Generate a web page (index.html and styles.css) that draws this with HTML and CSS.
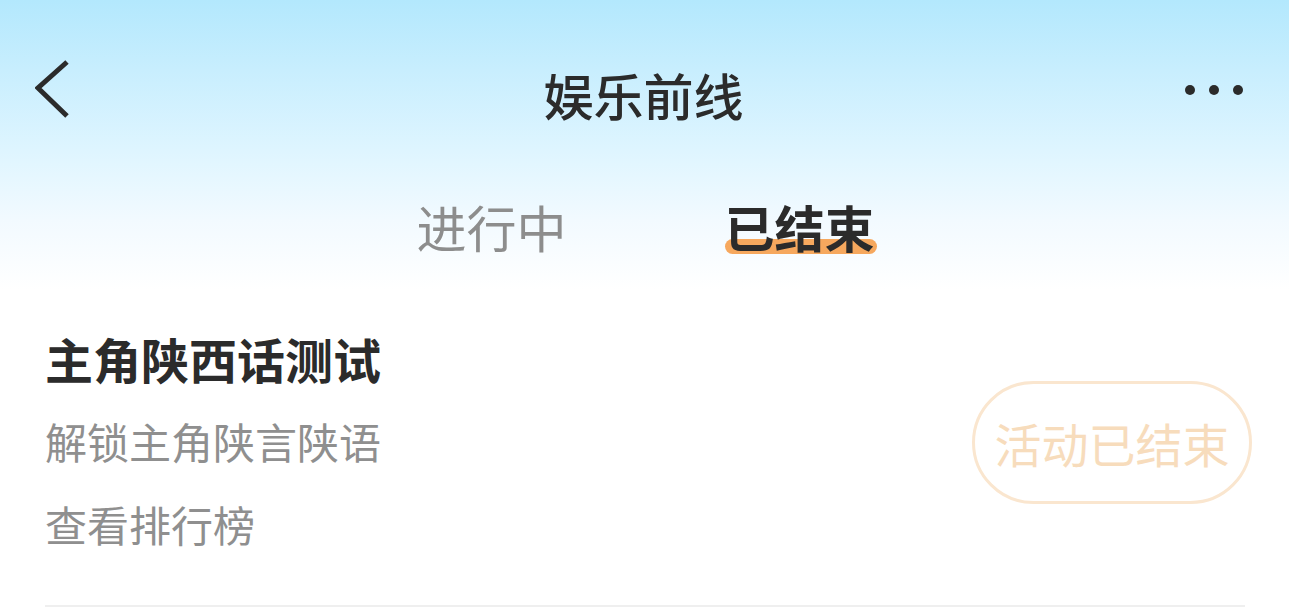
FILE: index.html
```html
<!DOCTYPE html>
<html lang="zh-CN">
<head>
<meta charset="utf-8">
<title>娱乐前线</title>
<link rel="stylesheet" href="styles.css">
</head>
<body>
<div class="page">
  <header class="nav">
    <div class="nav-left">
      <svg class="back" width="40" height="60" viewBox="0 0 40 60">
        <polyline points="32,2 3,28 32,56" fill="none" stroke="#2b2b2b" stroke-width="5"/>
      </svg>
    </div>
    <h1 class="nav-title">娱乐前线</h1>
    <div class="nav-right">
      <span class="dot"></span><span class="dot"></span><span class="dot"></span>
    </div>
  </header>
  <nav class="tabs">
    <span class="tab">进行中</span>
    <span class="tab active">已结束</span>
  </nav>
  <section class="list">
    <div class="item">
      <div class="info">
        <div class="item-title">主角陕西话测试</div>
        <div class="item-sub">解锁主角陕言陕语</div>
        <div class="item-sub">查看排行榜</div>
      </div>
      <div class="btn-ended">活动已结束</div>
    </div>
  </section>
</div>
</body>
</html>
```
FILE: styles.css
```css
html, body {
  margin: 0;
  padding: 0;
  background: #fff;
}
body {
  font-family: "Noto Sans CJK SC", "Noto Sans", sans-serif;
  color: #333;
}
.page {
  width: 1289px;
  height: 614px;
  overflow: hidden;
  background: linear-gradient(180deg, #b3e8fd 0px, #c8eefe 70px, #def5ff 150px, #f2faff 220px, #ffffff 290px);
}
.nav {
  height: 194px;
  display: flex;
  align-items: center;
  justify-content: space-between;
}
.nav-left {
  width: 200px;
  box-sizing: border-box;
  padding-left: 35px;
  padding-bottom: 14px;
  display: flex;
  align-items: center;
}
.back {
  display: block;
}
.nav-title {
  margin: 0;
  font-size: 50px;
  font-weight: 500;
  color: #2b2b2b;
  line-height: 60px;
  padding-bottom: 6px;
  padding-right: 2px;
}
.nav-right {
  width: 200px;
  display: flex;
  justify-content: flex-end;
  gap: 14px;
  padding-right: 46px;
  box-sizing: border-box;
  padding-bottom: 14px;
}
.dot {
  width: 10px;
  height: 10px;
  border-radius: 50%;
  background: #2b2b2b;
}
.tabs {
  height: 64px;
  display: flex;
  justify-content: center;
  gap: 158px;
  padding-left: 2px;
}
.tab {
  font-size: 50px;
  line-height: 64px;
  color: #8d8d8d;
  position: relative;
  isolation: isolate;
}
.tab.active {
  color: #2b2b2b;
  font-weight: 700;
  z-index: 0;
}
.tab.active::after {
  content: "";
  position: absolute;
  left: 0;
  right: -2px;
  top: 45px;
  height: 15px;
  border-radius: 8px;
  background: #f6a85e;
  z-index: -1;
}
.list {
  margin-top: 70px;
  padding: 0 37px 0 45px;
}
.item {
  display: flex;
  align-items: center;
  justify-content: space-between;
  border-bottom: 2px solid #efefef;
  padding-bottom: 51px;
  margin-right: 7px;
}
.info {
  display: flex;
  flex-direction: column;
  gap: 23px;
}
.item-title {
  font-size: 48px;
  font-weight: 700;
  line-height: 60px;
  color: #2b2b2b;
}
.item-sub {
  font-size: 42px;
  line-height: 60px;
  color: #8f8f8f;
}
.btn-ended {
  width: 274px;
  height: 117px;
  border: 3px solid #fae6cf;
  border-radius: 62px;
  display: flex;
  align-items: center;
  justify-content: center;
  font-size: 47px;
  color: #f7dcbc;
  margin-right: -7px;
  margin-top: 2px;
}
```
